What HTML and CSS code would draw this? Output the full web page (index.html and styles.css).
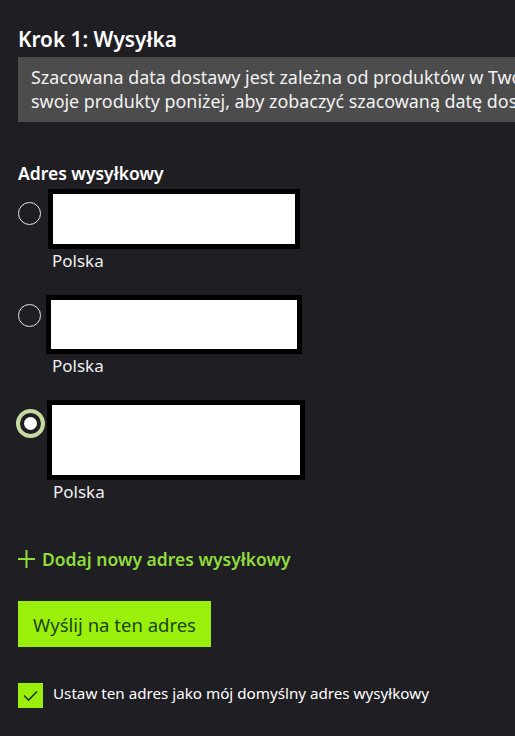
FILE: index.html
```html
<!DOCTYPE html>
<html lang="pl">

<head>
    <meta charset="UTF-8">
    <meta name="viewport" content="width=device-width, initial-scale=1.0">
    <title>Krok 1: Wysyłka</title>
    <link rel="stylesheet" href="styles.css">
</head>

<body>

    <div class="checkout">
        <h1>Krok 1: Wysyłka</h1>
        <div class="notice">
            Szacowana data dostawy jest zależna od produktów w Twoim koszyku. Sprawdź<br>
            swoje produkty poniżej, aby zobaczyć szacowaną datę dostawy.
        </div>

        <h2>Adres wysyłkowy</h2>

        <div class="address-list">
            <label class="address">
                <span class="radio first"></span>
                <span class="address-body">
                    <span class="mask mask-a"></span>
                    <span class="country">Polska</span>
                </span>
            </label>
            <label class="address">
                <span class="radio"></span>
                <span class="address-body">
                    <span class="mask mask-b"></span>
                    <span class="country">Polska</span>
                </span>
            </label>
            <label class="address">
                <span class="radio checked"></span>
                <span class="address-body">
                    <span class="mask mask-c"></span>
                    <span class="country">Polska</span>
                </span>
            </label>
        </div>

        <a class="add-link" href="#">
            <svg width="17" height="18" viewBox="0 0 17 18">
                <path d="M8.5 0v18M0 9h17" stroke="#8fdc3c" stroke-width="2" fill="none" />
            </svg>
            Dodaj nowy adres wysyłkowy
        </a>

        <button class="primary">Wyślij na ten adres</button>

        <label class="default-check">
            <span class="checkbox">
                <svg width="25" height="25" viewBox="0 0 25 25">
                    <path d="M6 12.5l4.5 4.5 8.5-8.5" stroke="#1d3a0c" stroke-width="1.6" fill="none" />
                </svg>
            </span>
            <span>Ustaw ten adres jako mój domyślny adres wysyłkowy</span>
        </label>
    </div>

</body>

</html>
```

FILE: styles.css
```css
html, body {
    margin: 0;
    overflow: hidden;
}

body {
    font-family: 'Noto Sans', 'Open Sans', sans-serif;
    background-color: #1f1e23;
    color: #ffffff;
    height: 736px;
}

.checkout {
    padding: 26px 0 0 18px;
}

.checkout h1 {
    font-size: 20.8px;
    font-weight: 600;
    line-height: 26px;
    margin: 0 0 5px 0;
}

.notice {
    background-color: #4c4c4c;
    color: #f2f2f2;
    width: 620px;
    padding: 8px 13px 9px 13px;
    font-size: 17.9px;
    line-height: 24px;
    white-space: nowrap;
}

.checkout h2 {
    font-size: 17.5px;
    font-weight: 600;
    line-height: 22px;
    margin: 40px 0 5px 0;
}

.address-list {
    display: flex;
    flex-direction: column;
    gap: 23px;
}

.address {
    display: flex;
    align-items: flex-start;
}

.radio {
    width: 21px;
    height: 21px;
    border: 1.5px solid #e6e6e6;
    border-radius: 50%;
    margin-top: 9px;
    flex-shrink: 0;
}

.radio.first {
    margin-top: 13px;
}

.radio.checked {
    border: 4px solid #c5d9a0;
    width: 21px;
    height: 21px;
    margin: 9px -3px 0 -2px;
    display: flex;
    align-items: center;
    justify-content: center;
}

.radio.checked::after {
    content: '';
    width: 13px;
    height: 13px;
    border-radius: 50%;
    background-color: #ffffff;
}

.address-body {
    display: flex;
    flex-direction: column;
    margin-left: 5px;
}

.mask {
    display: block;
    background-color: #ffffff;
    border: 5px solid #000000;
}

.mask-a {
    width: 242px;
    height: 50px;
    margin-left: 2px;
}

.mask-b {
    width: 246px;
    height: 49px;
}

.mask-c {
    width: 248px;
    height: 70px;
}

.country {
    font-size: 17px;
    line-height: 22px;
    color: #f0f0f0;
    margin: 1px 0 0 6px;
}

.add-link {
    display: flex;
    align-items: center;
    gap: 7px;
    margin-top: 44px;
    color: #8fdc3c;
    font-size: 17.5px;
    font-weight: 600;
    text-decoration: none;
    line-height: 24px;
}

.primary {
    display: block;
    margin-top: 30px;
    width: 193px;
    height: 46px;
    background-color: #9bf00b;
    color: #1a4512;
    border: none;
    font-family: inherit;
    font-size: 18.5px;
    padding: 0;
    cursor: pointer;
}

.default-check {
    display: flex;
    align-items: flex-start;
    gap: 10px;
    margin-top: 36px;
    font-size: 15.2px;
    line-height: 20px;
    color: #ffffff;
}

.checkbox {
    width: 25px;
    height: 25px;
    background-color: #9bf00b;
    flex-shrink: 0;
}

.checkbox svg {
    display: block;
}
```
